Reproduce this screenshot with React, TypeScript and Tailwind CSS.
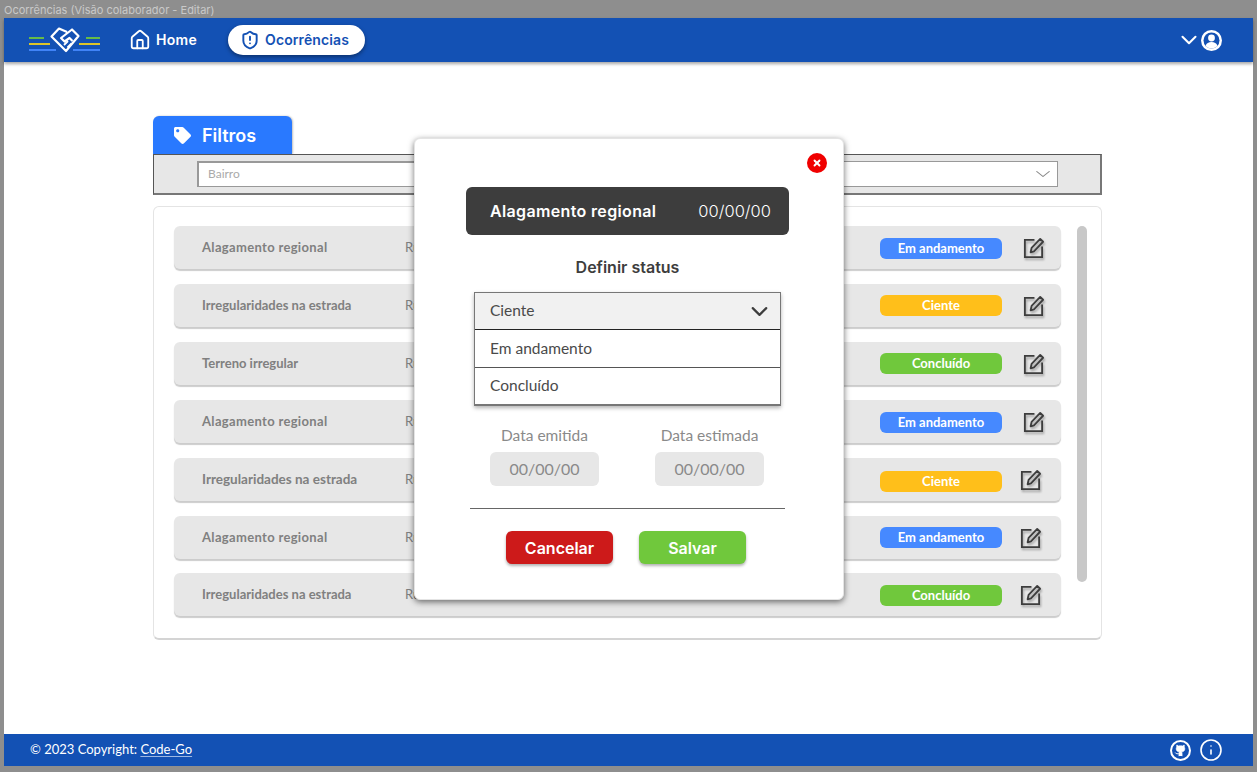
import React from "react"
import { ChevronDown, Github, Home, Info, ShieldAlert, X } from "lucide-react"
import { FaTag } from "react-icons/fa"

const rows = [
  { title: "Alagamento regional", titleClass: "text-[13px] tracking-[0.33px]", status: "Em andamento", rowClass: "mb-[15px]", badgeClass: "mt-[1px]", iconClass: "ml-[20px]" },
  { title: "Irregularidades na estrada", titleClass: "text-[13px]", status: "Ciente", rowClass: "mb-[15px]", badgeClass: "", iconClass: "ml-[20px]" },
  { title: "Terreno irregular", titleClass: "text-[13px]", status: "Concluído", rowClass: "mb-[15px]", badgeClass: "", iconClass: "ml-[20px]" },
  { title: "Alagamento regional", titleClass: "text-[13px] tracking-[0.33px]", status: "Em andamento", rowClass: "mb-[15px]", badgeClass: "mt-[2px]", iconClass: "ml-[20px]" },
  { title: "Irregularidades na estrada", titleClass: "text-[13.5px]", status: "Ciente", rowClass: "mb-[15px]", badgeClass: "mt-[3px]", iconClass: "ml-[17px]" },
  { title: "Alagamento regional", titleClass: "text-[13px] tracking-[0.33px]", status: "Em andamento", rowClass: "mb-[14px]", badgeClass: "", iconClass: "ml-[17px]" },
  { title: "Irregularidades na estrada", titleClass: "text-[13px]", status: "Concluído", rowClass: "", badgeClass: "mt-[1px]", iconClass: "ml-[17px]" },
]

const statusColors: Record<string, string> = {
  "Em andamento": "bg-[#4689ff]",
  Ciente: "bg-[#ffbf1a]",
  "Concluído": "bg-[#70c83c]",
}

const Logo = () => (
  <svg width="72" height="26" viewBox="0 0 72 26" fill="none" className="shrink-0">
    <path d="M1 11h15" stroke="#70c83c" strokeWidth="1.8" />
    <path d="M1 17h21" stroke="#f2d21b" strokeWidth="1.8" />
    <path d="M1 23h27" stroke="#4689ff" strokeWidth="1.8" />
    <path d="M58 11h14" stroke="#70c83c" strokeWidth="1.8" />
    <path d="M51 17h21" stroke="#f2d21b" strokeWidth="1.8" />
    <path d="M45 23h27" stroke="#4689ff" strokeWidth="1.8" />
    <path
      d="M39 5 31 1.5 23.5 9.5 38 24 50.5 9 44 2.5 33 11l3.5 3.5 5-3.5 3 3"
      stroke="#fff"
      strokeWidth="2.2"
      strokeLinejoin="round"
    />
    <path d="M36 18l4-4M39.5 20.5l4-4" stroke="#fff" strokeWidth="1.8" />
  </svg>
)

const UserIcon = () => (
  <svg width="21" height="21" viewBox="0 0 21 21" className="shrink-0">
    <circle cx="10.5" cy="10.5" r="10.5" fill="#fff" />
    <circle cx="10.5" cy="10.5" r="8" fill="#1351b4" />
    <circle cx="10.5" cy="8" r="3.4" fill="#fff" />
    <path d="M4.5 16c1-3 3-4 6-4s5 1 6 4c-1.500 1.600-3.600 2.500-6 2.500s-4.500-.9-6-2.500z" fill="#fff" />
  </svg>
)

const EditIcon = ({ className }: { className: string }) => (
  <svg width="23" height="23" viewBox="0 0 24 24" fill="none" stroke="#3d3d3d" strokeWidth="1.9" className={className}>
    <path d="M13 4H3v18h18V11" />
    <path d="M9 17l1-4.500L19 3l3 3-9.500 10z" strokeLinejoin="round" />
  </svg>
)

const App = () => {
  return (
    <div className="w-[1257px] h-[772px] bg-[#8e8e8e] px-1 pb-1.5 flex flex-col overflow-hidden font-['Lato',sans-serif]">
      <div className="h-[18px] text-[11px] leading-[20px] text-[#c9c9c9] font-['Inter',sans-serif]">
        Ocorrências (Visão colaborador - Editar)
      </div>

      {/* Header */}
      <header className="h-[44px] shrink-0 bg-[#1351b4] flex items-center pl-6 pr-[31px] shadow-[0_2px_3px_rgba(0,0,0,0.35)] z-10 font-['Inter',sans-serif]">
        <Logo />
        <div className="flex items-center ml-[29px] text-white gap-[5px]">
          <Home size={22} strokeWidth={2} />
          <span className="text-sm font-semibold tracking-[0.3px]">Home</span>
        </div>
        <div className="flex items-center ml-[31px] h-[30px] w-[137px] pl-[12px] gap-[5px] rounded-full bg-white text-[#1351b4] shadow-[0_2px_4px_rgba(0,0,0,0.4)]">
          <ShieldAlert size={20} strokeWidth={2.3} />
          <span className="text-sm font-semibold tracking-[0.1px]">Ocorrências</span>
        </div>
        <div className="ml-auto flex items-center text-white">
          <ChevronDown size={26} strokeWidth={1.9} className="-mr-[1px]" />
          <UserIcon />
        </div>
      </header>

      {/* Page */}
      <main className="relative flex-1 bg-white pt-[54px] pl-[149px] pr-[151px]">
        <div className="w-[139px] h-[38px] bg-[#2979ff] rounded-t-md flex items-center pl-[21px] gap-[11px] text-white shadow-[1px_0_2px_rgba(0,0,0,0.25)]">
          <FaTag size={17} />
          <span className="pt-0.5 text-lg font-semibold font-['Inter',sans-serif]">Filtros</span>
        </div>
        <div className="h-[41px] bg-[#e7e7e7] border border-[#555] border-b-2 border-r-2 border-b-[#777] border-r-[#777] grid grid-cols-2 gap-5 pl-[43px] pr-[42px] pt-1.5">
          <div className="h-[26px] bg-white border border-[#999] border-t-2 border-l-2 pl-[9px] text-xs leading-[22px] text-[#aaa]">
            Bairro
          </div>
          <div className="h-[26px] bg-white border border-[#999] flex items-center justify-end pr-[4px] text-[#888]">
            <ChevronDown size={20} strokeWidth={1.2} className="scale-x-125" />
          </div>
        </div>

        <div className="mt-[11px] h-[434px] bg-white border border-[#e4e4e4] border-b-2 border-b-[#d4d4d4] rounded-md flex pl-5 pr-[14px] pt-[19px]">
          <div className="w-[887px] flex flex-col">
            {rows.map((row, i) => (
              <div
                key={i}
                className={`${row.rowClass} h-[43px] shrink-0 bg-[#e7e7e7] rounded-md shadow-[0_2px_1px_rgba(0,0,0,0.2)] flex items-center pl-[28px]`}
              >
                <span className={`${row.titleClass} w-[203px] font-bold text-[#808080]`}>{row.title}</span>
                <span className="w-[475px] text-[13px] text-[#808080] whitespace-nowrap">Rua das Flores</span>
                <span
                  className={`${statusColors[row.status]} ${row.badgeClass} w-[122px] h-[21px] rounded-md text-center text-[13px] leading-[21px] font-bold text-white`}
                >
                  {row.status}
                </span>
                <EditIcon className={`${row.iconClass} drop-shadow-[1px_2px_1px_rgba(0,0,0,0.3)]`} />
              </div>
            ))}
          </div>
          <div className="ml-4 w-2.5 h-[356px] bg-[#c8c8c8] rounded-full" />
        </div>

        {/* Modal */}
        <div className="absolute left-[410px] top-[76px] w-[430px] h-[462px] bg-white rounded-md border border-[#e4e4e4] shadow-[0_2px_6px_rgba(0,0,0,0.55)] pt-[48px] px-[51px]">
          <button className="absolute right-[16px] top-[14px] w-5 h-5 rounded-full bg-[#f00000] flex items-center justify-center text-white">
            <X size={10} strokeWidth={4.5} />
          </button>

          <div className="h-[48px] w-[323px] bg-[#3d3d3d] rounded-md flex items-center justify-between pl-6 pr-[18px] text-white font-['Inter',sans-serif]">
            <span className="text-[16px] font-semibold tracking-[0.35px]">Alagamento regional</span>
            <span className="text-[16.5px] font-light">00/00/00</span>
          </div>

          <p className="mt-[22px] h-[20px] w-[323px] text-center text-base leading-[20px] font-semibold text-[#3d3d3d] font-['Inter',sans-serif]">
            Definir status
          </p>

          <div className="mt-[15px] ml-2 w-[307px] border border-[#777] border-b-2 shadow-[0_2px_4px_rgba(0,0,0,0.3)] text-[15.5px] text-[#4a4a4a]">
            <div className="h-[37px] bg-[#f1f1f1] border-b border-b-[#222] flex items-center justify-between pl-[15px] pr-[7px]">
              <span>Ciente</span>
              <ChevronDown size={27} strokeWidth={1.9} className="text-[#3d3d3d]" />
            </div>
            <div className="h-[38px] border-b border-b-[#555] flex items-center pl-[15px]">Em andamento</div>
            <div className="h-[36px] flex items-center pl-[15px]">Concluído</div>
          </div>

          <div className="mt-[19px] ml-6 flex gap-14 text-[#8a8a8a]">
            <div className="w-[109px] text-center">
              <div className="text-[15.5px] leading-[20px]">Data emitida</div>
              <div className="mt-[7px] h-[34px] rounded-md bg-[#e7e7e7] text-[16px] leading-[33px]">00/00/00</div>
            </div>
            <div className="w-[109px] text-center">
              <div className="text-[15.5px] leading-[20px]">Data estimada</div>
              <div className="mt-[7px] h-[34px] rounded-md bg-[#e7e7e7] text-[16px] leading-[33px]">00/00/00</div>
            </div>
          </div>

          <hr className="mt-[22px] w-[315px] ml-1 border-0 h-px bg-[#666]" />

          <div className="mt-[22px] ml-10 flex gap-[26px] font-['Inter',sans-serif] text-base font-semibold text-white">
            <button className="w-[107px] h-[33px] rounded-md bg-[#cd1a1a] shadow-[0_2px_3px_rgba(0,0,0,0.3)]">Cancelar</button>
            <button className="w-[107px] h-[33px] rounded-md bg-[#70c83c] shadow-[0_2px_3px_rgba(0,0,0,0.3)]">Salvar</button>
          </div>
        </div>
      </main>

      {/* Footer */}
      <footer className="h-[32px] shrink-0 bg-[#1351b4] flex items-center pl-[26px] pr-[30px] text-white text-[13px]">
        <span>
          © 2023 Copyright: <span className="underline underline-offset-2 decoration-[#9db8e3]">Code-Go</span>
        </span>
        <div className="ml-auto flex items-center gap-2">
          <div className="w-[21px] h-[21px] rounded-full border-2 border-white flex items-center justify-center">
            <Github size={13} fill="#fff" strokeWidth={1} />
          </div>
          <Info size={24} strokeWidth={1.6} />
        </div>
      </footer>
    </div>
  )
}

export default App
